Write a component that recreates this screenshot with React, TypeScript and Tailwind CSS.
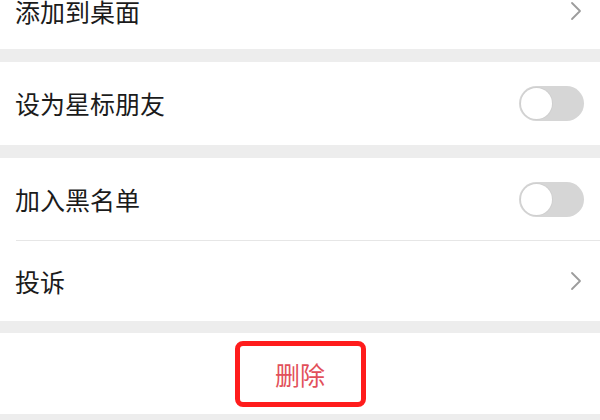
import React from "react";

const font = { fontFamily: '"Noto Sans CJK SC", "Noto Sans", sans-serif' };

function Toggle() {
  return (
    <div className="flex h-[35px] w-[65px] items-center rounded-full bg-[#d6d6d6] p-[2px]">
      <div className="h-[31px] w-[31px] rounded-full bg-white shadow-[0_0_0_1px_#cfcfcf]" />
    </div>
  );
}

function Chevron() {
  return (
    <svg width="12" height="20" viewBox="0 0 12 20" className="mr-[2px]">
      <path d="M2 2 L10 10 L2 18" fill="none" stroke="#9c9c9c" strokeWidth="1.8" strokeLinecap="round" strokeLinejoin="round" />
    </svg>
  );
}

function Row({ label, right, className = "" }: { label: string; right: React.ReactNode; className?: string }) {
  return (
    <div className={`flex items-center justify-between bg-white pl-[15px] pr-[16px] ${className}`}>
      <span className="text-[25px] leading-none text-[#1b1b1b]">{label}</span>
      {right}
    </div>
  );
}

export default function App() {
  return (
    <div className="h-[420px] w-[600px] overflow-hidden bg-[#ededed]" style={font}>
      <Row label="添加到桌面" right={<Chevron />} className="mt-[-27px] h-[76px]" />
      <div className="h-[13px]" />
      <Row label="设为星标朋友" right={<Toggle />} className="h-[83px]" />
      <div className="h-[13px]" />
      <div className="bg-white">
        <Row label="加入黑名单" right={<Toggle />} className="h-[82px]" />
        <div className="ml-[16px] h-px bg-[#e6e6e6]" />
        <Row label="投诉" right={<Chevron />} className="h-[80px]" />
      </div>
      <div className="h-[12px]" />
      <div className="flex h-[81px] items-center justify-center bg-white">
        <div className="flex h-[66px] w-[131px] items-center justify-center rounded-[8px] border-[5px] border-[#ff1c1c] pt-[2px]">
          <span className="text-[25px] leading-none text-[#e2505a]">删除</span>
        </div>
      </div>
    </div>
  );
}
